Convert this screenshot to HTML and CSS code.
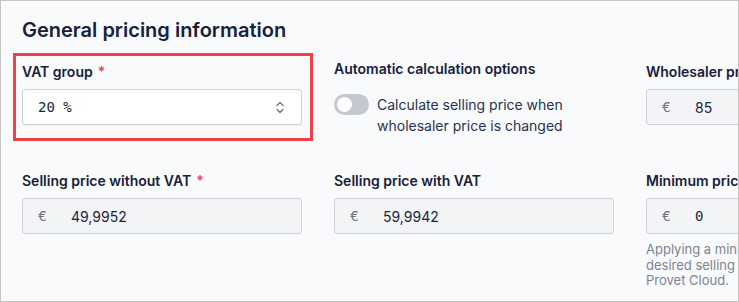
FILE: index.html
```html
<!DOCTYPE html>
<html lang="en">
<head>
<meta charset="utf-8">
<title>General pricing information</title>
<link rel="stylesheet" href="styles.css">
</head>
<body>
<div class="frame">
  <h2 class="title">General pricing information</h2>
  <div class="grid">
    <div class="field highlighted">
      <label class="label">VAT group<span class="req">*</span></label>
      <div class="input select">
        <span class="mono">20 %</span>
        <svg class="chev" width="8" height="13" viewBox="0 0 8 13" fill="none" stroke="#6b7280" stroke-width="1.3" stroke-linecap="round" stroke-linejoin="round"><path d="M1 4.5 L4 1.5 L7 4.5"/><path d="M1 8.5 L4 11.5 L7 8.5"/></svg>
      </div>
      <div class="highlight"></div>
    </div>
    <div class="field">
      <label class="label up">Automatic calculation options</label>
      <div class="option">
        <span class="toggle"><span class="knob"></span></span>
        <span class="option-text">Calculate selling price when<br>wholesaler price is changed</span>
      </div>
    </div>
    <div class="field">
      <label class="label">Wholesaler price</label>
      <div class="input disabled">
        <span class="cur">€</span><span class="val">85</span>
      </div>
    </div>

    <div class="field">
      <label class="label">Selling price without VAT<span class="req">*</span></label>
      <div class="input disabled">
        <span class="cur">€</span><span class="val">49,9952</span>
      </div>
    </div>
    <div class="field">
      <label class="label">Selling price with VAT</label>
      <div class="input disabled">
        <span class="cur">€</span><span class="val">59,9942</span>
      </div>
    </div>
    <div class="field">
      <label class="label">Minimum price</label>
      <div class="input disabled">
        <span class="cur">€</span><span class="val mono">0</span>
      </div>
      <p class="help">Applying a minimum price will prevent the desired selling price from going below it in Provet Cloud.</p>
    </div>
  </div>
</div>
</body>
</html>
```

FILE: styles.css
```css
* { box-sizing: border-box; }
html, body { margin: 0; padding: 0; background: #ffffff; }
body { font-family: Inter, "Noto Sans", sans-serif; color: #1c2742; }

.frame {
  width: 739px;
  height: 302px;
  border: 1px solid #c4c4c4;
  background: #f9fafb;
  overflow: hidden;
  padding: 17px 0 0 21px;
}

.title {
  margin: 0 0 20px 0;
  font-size: 20px;
  line-height: 24px;
  font-weight: 600;
  color: #16213b;
  letter-spacing: 0;
}

.grid {
  display: grid;
  grid-template-columns: 280px 280px 280px;
  column-gap: 32px;
  row-gap: 35px;
}

.field { position: relative; min-width: 0; }

.label {
  display: block;
  font-size: 14px;
  line-height: 20px;
  font-weight: 600;
  color: #16213b;
  white-space: nowrap;
  margin-bottom: 7px;
}
.label.up { margin-top: -3px; }

.req { color: #e5484d; margin-left: 5px; }

.input {
  height: 36px;
  border: 1px solid #cdd2d9;
  border-radius: 3px;
  display: flex;
  align-items: center;
  padding: 0 15px;
  font-size: 14px;
  color: #1a2540;
  white-space: nowrap;
}
.select {
  background: #ffffff;
  justify-content: space-between;
  padding-right: 17px;
  box-shadow: 0 1px 1px rgba(0,0,0,0.04);
}
.disabled { background: #f2f4f6; }

.mono { font-family: "DejaVu Sans Mono", "Liberation Mono", monospace; font-size: 14px; }

.cur { color: #6b7280; font-size: 13px; width: 33px; }
.val { color: #1a2540; }

.chev { display: block; }

.highlight {
  position: absolute;
  left: -9px;
  top: -9px;
  width: 300px;
  height: 88px;
  border: 3px solid #ef4248;
  pointer-events: none;
}

.option {
  display: flex;
  align-items: flex-start;
  gap: 8px;
  margin-top: 15px;
}
.toggle {
  flex: none;
  width: 35px;
  height: 21px;
  border-radius: 11px;
  background: #c4c9d0;
  display: flex;
  align-items: center;
  padding-left: 3px;
}
.knob {
  width: 15px;
  height: 15px;
  border-radius: 50%;
  background: #ffffff;
}
.option-text {
  font-size: 14px;
  line-height: 21px;
  color: #27324f;
}

.help {
  margin: 8px 0 0 0;
  font-size: 13px;
  line-height: 15.5px;
  color: #7b8494;
  width: 280px;
}
```
